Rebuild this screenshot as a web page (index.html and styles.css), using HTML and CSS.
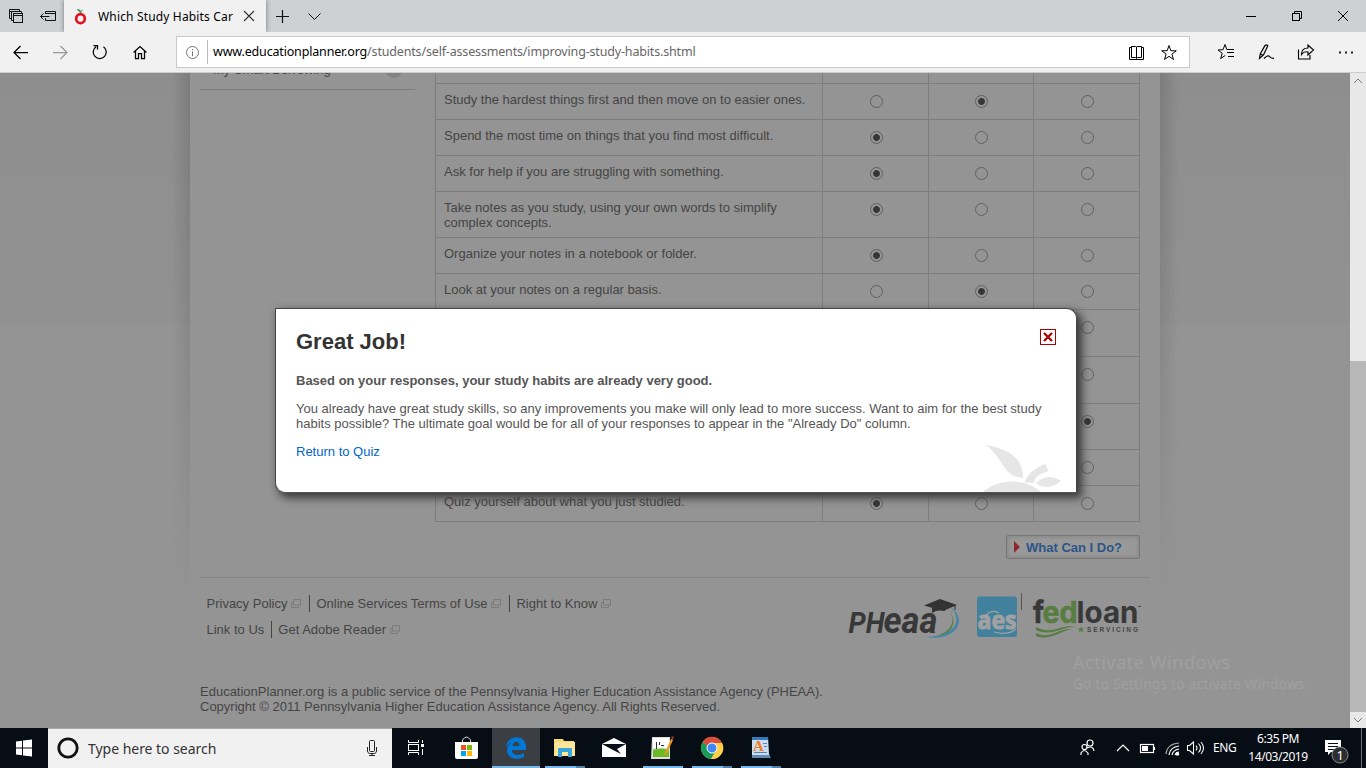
FILE: index.html
```html
<!DOCTYPE html>
<html lang="en">
<head>
<meta charset="utf-8">
<title>Which Study Habits Can You Improve?</title>
<link rel="stylesheet" href="styles.css">
</head>
<body>
<header class="tabbar">
  <svg class="tab-tools" width="64" height="32" fill="none" stroke="#111"><path d="M11.500 18.500h-2v-9h10v2M9.500 11.500h2M13.500 20.500h-2v-9h10v2"/><rect x="13.500" y="13.500" width="9" height="9" fill="#ced0d2"/><path d="M13.500 15.500h9M45.500 14v-2.500h10v9h-10v-2.500M45.500 13.500h10M40.500 16.500h9M43.500 13.500l-3 3 3 3"/></svg>
  <div class="tab">
    <svg width="14" height="20" viewBox="0 0 14 20"><ellipse cx="6.500" cy="12.700" rx="4.300" ry="4.500" fill="none" stroke="#e60f1e" stroke-width="2.700"/><path d="M6 7C5 5 3 4 3 3c3 0 3 1 4 2 1-2 2-1 3-1-2 0-2 1-3 3" fill="#3e9b60"/></svg>
    <span class="tab-title">Which Study Habits Car</span>
    <svg class="tab-x" width="12" height="12" stroke="#333" stroke-width="1.100"><path d="M1 1l10 10M11 1L1 11"/></svg>
  </div>
  <svg class="tab-new" width="64" height="32" fill="none" stroke="#111"><path d="M10 16.500h13M16.500 10v13" stroke-width="1.200"/><path d="M42.500 13.500l6 6 6-6"/></svg>
  <svg class="win-controls" width="138" height="32" fill="none" stroke="#000"><path d="M18 16.500h10"/><path d="M66.500 13v-1.500h7v7H72"/><rect x="64.500" y="13.500" width="7" height="7"/><path d="M110 11l10 10M120 11l-10 10"/></svg>
</header>
<nav class="toolbar">
  <svg class="nav-icons" width="176" height="40" fill="none" stroke="#000" stroke-width="1.250"><path d="M28 20.500H14M20.500 14L14 20.500l6.500 6.500"/><path d="M53 20.500h14M60.500 14l6.500 6.500-6.500 6.500" stroke="#999"/><path d="M96 14.800a6.500 6.500 0 1 0 7.500 0M93.500 13.500h4v4"/><path d="M133.500 20.500l6.500-6 6.500 6M135.500 19v7.500h3v-5h3v5h3V19"/></svg>
  <div class="address">
    <svg width="30" height="30" fill="none" stroke="#777"><circle cx="15.500" cy="15.500" r="6"/><path d="M15.500 14.500v4.500M15.500 12v1.200"/></svg>
    <p class="url"><b>www.educationplanner.org</b>/students/self-assessments/improving-study-habits.shtml</p>
    <svg width="66" height="30" fill="none" stroke="#000"><path d="M8.500 9.500h4q1 0 1 1 0-1 1-1h4v11h-4l-1 1-1-1h-4zM13.500 10v11M8.500 10.500h-2v12h14v-12h-2"/><path d="M46 8.500l1.800 5.200 5.500.1-4.400 3.300 1.600 5.400-4.500-3.200-4.500 3.200 1.600-5.400-4.400-3.300 5.500-.1z"/></svg>
  </div>
  <svg class="tool-icons" width="176" height="40" fill="none" stroke="#000"><path d="M39 17.500h-2.200L35 12.500 33 17.700l-5 .3 4.200 3.300-1.500 5.200 4.500-3M38 17.500h6M37 20.500h7M38 24.500h6"/><path d="M69.500 26.500l.8-4.500 4.700-8.500q2-1.500 2.800.3l-4.300 9.200zM70.500 22l2.800 1.500M74 26.500q4-4 5.500-2t4.500 1.800" stroke-width="1.200"/><path d="M108.500 17.500v9.500h11.500v-4M111.500 22.500q0-6.500 6.500-6.500v-3l5.500 5-5.500 5v-3q-4-1-6.500 2.500z" stroke-width="1.150"/><g fill="#222" stroke="none"><path d="M149 19.500h2v2h-2zM155 19.500h2v2h-2zM161 19.500h2v2h-2z"/></g></svg>
</nav>
<main class="viewport">
  <div class="page">
    <div class="gutter gutter-left"></div>
    <div class="sheet">
      <div class="columns">
        <aside class="sidebar"><span>My Smart Borrowing</span><i></i></aside>
        <div class="quiz">
          <div class="row stub"><p></p><span></span><span></span><span></span></div>
          <div class="row"><p>Study the hardest things first and then move on to easier ones.</p><span><i></i></span><span><i class="on"></i></span><span><i></i></span></div>
          <div class="row"><p>Spend the most time on things that you find most difficult.</p><span><i class="on"></i></span><span><i></i></span><span><i></i></span></div>
          <div class="row"><p>Ask for help if you are struggling with something.</p><span><i class="on"></i></span><span><i></i></span><span><i></i></span></div>
          <div class="row tall"><p>Take notes as you study, using your own words to simplify<br>complex concepts.</p><span><i class="on"></i></span><span><i></i></span><span><i></i></span></div>
          <div class="row"><p>Organize your notes in a notebook or folder.</p><span><i class="on"></i></span><span><i></i></span><span><i></i></span></div>
          <div class="row"><p>Look at your notes on a regular basis.</p><span><i></i></span><span><i class="on"></i></span><span><i></i></span></div>
          <div class="row taller"><p></p><span></span><span></span><span><i></i></span></div>
          <div class="row taller"><p></p><span></span><span></span><span><i></i></span></div>
          <div class="row tall"><p></p><span></span><span></span><span><i class="on"></i></span></div>
          <div class="row"><p></p><span></span><span></span><span><i></i></span></div>
          <div class="row"><p>Quiz yourself about what you just studied.</p><span><i class="on"></i></span><span><i></i></span><span><i></i></span></div>
          <a class="button">What Can I Do?</a>
        </div>
      </div>
      <footer class="footer">
        <div class="links">
          <div class="link-row"><a>Privacy Policy<svg width="10" height="9"><use href="#ext"/></svg></a><a>Online Services Terms of Use<svg width="10" height="9"><use href="#ext"/></svg></a><a>Right to Know<svg width="10" height="9"><use href="#ext"/></svg></a></div>
          <div class="link-row"><a>Link to Us</a><a>Get Adobe Reader<svg width="10" height="9"><use href="#ext"/></svg></a></div>
        </div>
        <svg class="logos" width="296" height="50" viewBox="846 592 296 50">
          <defs><g id="ext" fill="none" stroke="#7b7b7b"><path d="M2 3.500H.5v5h7V7"/><rect x="2.500" y=".5" width="7" height="5.500"/></g></defs>
          <g font-family="Roboto, sans-serif" font-weight="700" font-style="italic" fill="#383838">
            <text x="848.500" y="632.500" font-size="29" textLength="36" lengthAdjust="spacingAndGlyphs">PH</text>
            <text x="883.500" y="632.500" font-size="36" textLength="54" lengthAdjust="spacingAndGlyphs">eaa</text>
          </g>
          <path d="M924 605.500l16-6.500 17 6-14 6z" fill="#333"/><path d="M932 608v5q6-4 13-2v-3z" fill="#333"/><path d="M951 605l4 1v4" stroke="#333" fill="none"/>
          <path d="M947 609c11 10 5 24-14 28 19 0 27-17 14-28" fill="#587d41"/><path d="M950 607c15 14 3 30-24 30 30 5 43-18 24-30" fill="#4087a5"/>
          <rect x="977" y="596.500" width="40" height="40.500" rx="3" fill="#42819e"/>
          <text x="977.500" y="629" font-family="Open Sans, sans-serif" font-weight="700" font-size="25" fill="#a1a1a1" stroke="#a1a1a1" textLength="39" lengthAdjust="spacingAndGlyphs">aes</text>
          <path d="M986 615q6-6 13-2M994 632q13 4 22-3" fill="none" stroke="#a1a1a1" stroke-width="1.300"/>
          <path d="M1021.500 593v17" stroke="#555"/>
          <g font-family="Inter, sans-serif" font-weight="700" font-size="30"><text x="1033" y="623" textLength="11" lengthAdjust="spacingAndGlyphs" fill="#383838" stroke="#383838" stroke-width=".6">f</text><text x="1042.500" y="623" textLength="35" lengthAdjust="spacingAndGlyphs" fill="#587d41" stroke="#587d41" stroke-width=".6">ed</text><text x="1076.500" y="623" textLength="62" lengthAdjust="spacingAndGlyphs" fill="#383838">loan</text></g>
          <path d="M1036 627c17 9 25-4 39 0-14 0-24 10-39 3zM1036 633c15 7 21-5 36-4-14 3-22 12-36 7z" fill="#587d41"/>
          <path d="M1081 626.500l1 2h2.500l-2 1.600.8 2.400-2.300-1.400-2.300 1.400.8-2.400-2-1.600h2.500z" fill="#587d41"/>
          <text x="1087" y="632" font-family="Liberation Sans, sans-serif" font-weight="700" font-size="6.500" fill="#444" textLength="51">SERVICING</text>
          <path d="M1138 606.500h3" stroke="#444"/>
        </svg>
      </footer>
      <p class="legal">EducationPlanner.org is a public service of the Pennsylvania Higher Education Assistance Agency (PHEAA).<br>Copyright © 2011 Pennsylvania Higher Education Assistance Agency. All Rights Reserved.</p>
    </div>
    <div class="gutter gutter-right"></div>
    <section class="dialog">
      <h1>Great Job!</h1>
      <svg class="close" width="16" height="16"><rect x=".5" y=".5" width="15" height="15" fill="#fff" stroke="#a00"/><path d="M4 4l8 8M12 4l-8 8" stroke="#a00" stroke-width="2.300"/></svg>
      <h2>Based on your responses, your study habits are already very good.</h2>
      <p>You already have great study skills, so any improvements you make will only lead to more success. Want to aim for the best study<br>habits possible? The ultimate goal would be for all of your responses to appear in the "Already Do" column.</p>
      <a>Return to Quiz</a>
      <svg class="apple" width="78" height="48" fill="#e6e6e6"><path d="M3 1c24 4 37 14 37 33-20-1-18-18-37-33M0 48c15-14 43-14 58 0zM41.500 39q4-13 21-19l3 7q-14 4-15 12-5-1-9 0M53 39q12-11 25-2-14 11-25 2"/></svg>
    </section>
    <div class="watermark"><p>Activate Windows</p><small>Go to Settings to activate Windows.</small></div>
  </div>
  <div class="scrollbar"><svg width="16" height="16" fill="none" stroke="#777"><path d="M4 10l4-4 4 4"/></svg><div class="thumb"></div><svg width="16" height="16" fill="none" stroke="#777"><path d="M4 6l4 4 4-4"/></svg></div>
</main>
<footer class="taskbar">
  <svg class="start" width="48" height="40" fill="#fff"><path d="M16 13.500l6-.8v6.800h-6zM23 12.600l9-1.100v8h-9zM16 20.500h6v6.800l-6-.8zM23 20.500h9v8l-9-1.100z"/></svg>
  <div class="search"><svg width="40" height="39"><circle cx="20" cy="19" r="9.200" fill="none" stroke="#111" stroke-width="2.800"/></svg><span>Type here to search</span><svg width="43" height="39" fill="none" stroke="#222"><rect x="20.500" y="11.500" width="5" height="11" rx="1"/><path d="M18.500 18v4q0 2 2 2.500h5q2-.5 2-2.500v-4M23 24v3M20 26.500h6"/></svg></div>
  <div class="apps">
    <svg width="48" height="40" fill="none" stroke="#fff"><path d="M16.500 12v2.500h10V12M16.500 27v-2.500h10V27M30.500 12v3M30.500 21v6"/><rect x="16.500" y="16.500" width="10" height="6"/><path d="M29 16h3v3h-3z" fill="#fff" stroke="none"/></svg>
    <svg width="48" height="40"><path d="M13 14h23v15q0 2-2 2H15q-2 0-2-2z" fill="#fff"/><path d="M20.500 14v-2q4-6 8 0v2" fill="none" stroke="#ddd"/><path d="M19 17h5v5h-5z" fill="#f25022"/><path d="M25 17h5v5h-5z" fill="#7fba00"/><path d="M19 23h5v5h-5z" fill="#00a4ef"/><path d="M25 23h5v5h-5z" fill="#ffb900"/></svg>
    <svg class="active" width="48" height="40" viewBox="0 0 48 40"><path d="M14 19c1-13 20-13 20 0v3H20c0 6 8 6 12 3v4c-8 4-17 1-17-7 0-4 2-6 5-8-3 1-5 3-6 5m6.500-1h7c0-6-6.500-5-7 0" fill="#0078d7"/><path d="M0 38h48v2H0z" fill="#76b9ed"/></svg>
    <svg width="48" height="40"><path d="M13 11h9l1 2h10v15H13z" fill="#f8d775"/><path d="M14 14h20v14H14z" fill="#ffe69b"/><path d="M17 29v-8q0-1 1-1h12q1 0 1 1v8h-4v-5h-6v5z" fill="#37a8dc"/><path d="M4 38h31v2H4z" fill="#76b9ed"/><path d="M35 38h9v2h-9z" fill="#527fa5"/></svg>
    <svg width="48" height="40"><path d="M12 16l12-6 12 6v13H12z" fill="#fff"/><path d="M12 16h24l-9 5 4 5-8-4z" fill="#07101a"/></svg>
    <svg width="48" height="40"><path d="M13 9h18v22H12z" fill="#ddd"/><path d="M14 10h16v10H14z" fill="#fff"/><path d="M14 22q8-3 16 0v7H14z" fill="#69b922"/><path d="M17.500 14v7M20.500 14v3M22 17.500h3" stroke="#333"/><path d="M26 24l6-13 2 1-6 13-3 3z" fill="#e99b21"/><path d="M32 11l1-3 2 1-1 3z" fill="#8b392d"/><path d="M4 38h40v2H4z" fill="#76b9ed"/></svg>
    <svg width="48" height="40"><circle cx="24" cy="20" r="11" fill="#e8b52a"/><path d="M24 20L14.500 14.500A11 11 0 0 1 34 15z" fill="#dc4d3c"/><path d="M14.500 14.500A11 11 0 0 0 23 31l5-9-4-2z" fill="#169b5a"/><path d="M24 15h10a11 11 0 0 1-11 16l5.500-9z" fill="#ffcf47"/><circle cx="24" cy="20" r="5" fill="#4285f4" stroke="#fff"/><path d="M4 38h31v2H4z" fill="#76b9ed"/><path d="M35 38h9v2h-9z" fill="#527fa5"/></svg>
    <svg width="48" height="40"><path d="M15 9h16l1 17 1 3H15z" fill="#cbddee"/><path d="M15 9h16v3H15z" fill="#3579ba"/><path d="M26 15.500h4M27 18.500h3M17 24.500h13" stroke="#4e86bb"/><path d="M15 27h17l2 3H15z" fill="#618bb1"/><text x="16" y="23" class="pad-letter">A</text><path d="M4 38h31v2H4z" fill="#76b9ed"/><path d="M35 38h9v2h-9z" fill="#527fa5"/></svg>
  </div>
  <svg class="tray" width="136" height="40" fill="none" stroke="#fff" stroke-width="1.200"><circle cx="14" cy="15" r="3"/><circle cx="8.500" cy="19" r="2.500"/><path d="M5 27v-2q3-5 7 0v2M11 20q6-3 7 3"/><path d="M41 23l6-6 6 6"/><rect x="64.500" y="16.500" width="13" height="8"/><path d="M66 18h6v5h-6z" fill="#fff" stroke="none"/><path d="M78.500 19v3"/><path d="M90 26q1-10 13-11" stroke="#aaa"/><path d="M93 27q1-8 10-9M96 27q1-5 7-6M99 27q1-3 4-3"/><circle cx="101.500" cy="26" r="1.200" fill="#fff"/><path d="M111.500 17.500h2l4-3.500v12l-4-3.500h-2zM120 17.500q2 2.500 0 5M122.500 15.500q4 4.500 0 9M125 14q5 6 0 12" stroke-width="1.050"/></svg>
  <span class="lang">ENG</span>
  <div class="clock"><span>6:35 PM</span><span>14/03/2019</span></div>
  <svg class="notice" width="52" height="40"><path d="M11 12h16v12H17l-3 3v-3h-3z" fill="#fff"/><path d="M14 15.500h10M14 18.500h10M14 21.500h7" stroke="#07101a"/><circle cx="26" cy="27" r="8" fill="#2b2d2f" stroke="#888"/><text x="22.500" y="32">1</text><path d="M47.500 0v40" stroke="#687078"/></svg>
</footer>
</body>
</html>
```
FILE: styles.css
```css
* { box-sizing: border-box; }
body { margin: 0; width: 1366px; height: 768px; overflow: hidden; display: flex; flex-direction: column; font: 13px/15px "Liberation Sans", Arial, sans-serif; color: #444; }
svg { display: block; flex-shrink: 0; }
p, h1, h2 { margin: 0; }
.tabbar { display: flex; height: 32px; background: #ced0d2; font-family: "Noto Sans", sans-serif; }
.tab { display: flex; align-items: center; width: 202px; height: 32px; padding-left: 10px; background: #f1f1f1; color: #000; box-shadow: 0 0 5px #777; clip-path: inset(0 -5px 0 -5px); }
.tab-title { width: 136px; margin-left: 10px; font-size: 12px; white-space: nowrap; letter-spacing: .16px; }
.tab-x { margin-left: 9px; }
.win-controls { margin-left: auto; }
.toolbar { display: flex; height: 41px; background: #f1f1f1; border-bottom: 1px solid #ccc; align-items: flex-start; }
.address { display: flex; width: 1014px; height: 32px; margin-top: 4px; border: 1px solid #c9c9c9; background: #fff; }
.url { flex: 1; margin: 3px 0; padding-left: 5px; border-left: 1px solid #bbb; font: 12.500px/24px "Noto Sans", sans-serif; color: #666; letter-spacing: -.165px; white-space: nowrap; }
.url b { color: #000; font-weight: 400; }
.viewport { display: flex; height: 655px; }
.page { position: relative; display: flex; width: 1350px; height: 655px; background: #949494; overflow: hidden; }
.gutter { width: 190px; background: linear-gradient(#8e8e8e, #919191) 0 0 / 100% 251px no-repeat; }
.gutter::before { content: ""; display: block; height: 600px; background: linear-gradient(90deg, transparent 172px, #7c7c7c 190px); mask-image: linear-gradient(#000, transparent 90%); }
.gutter-right::before { background: linear-gradient(270deg, transparent 172px, #7c7c7c 190px); }
.sheet { width: 970px; background: #949494; }
.columns { display: flex; height: 504px; padding-left: 10px; gap: 20px; }
.sidebar { display: flex; width: 215px; height: 17px; padding-left: 13px; border-bottom: 1px solid #7d7d7d; }
.sidebar span { margin-top: -11px; flex: 1; white-space: nowrap; }
.sidebar i { width: 16px; height: 16px; margin: -11px 13px 0 0; border-radius: 50%; background: #838383; }
.quiz { display: flex; flex-direction: column; width: 705px; }
.row { display: grid; grid-template-columns: 387px 106px 105px 106px; height: 36px; flex-shrink: 0; border-bottom: 1px solid #7d7d7d; border-left: 1px solid #7d7d7d; }
.row.stub { height: 11px; }
.row.tall { height: 46px; }
.row.taller { height: 47px; }
.row > * { border-right: 1px solid #7d7d7d; }
.row > span { display: flex; justify-content: center; padding-top: 11px; padding-left: 2px; }
.row > span:nth-child(3) { padding-left: 0; }
.row p { padding: 8px; white-space: nowrap; }
.row i { width: 13px; height: 13px; border: 1px solid #606060; border-radius: 50%; }
.row i.on { background: radial-gradient(circle, #363636 3px, transparent 3.800px); }
.button { position: relative; align-self: flex-end; width: 134px; height: 24px; margin-top: 13px; padding-left: 19px; border: 1px solid #777; border-radius: 2px; background: #999; box-shadow: inset 0 0 4px #7d7d7d; color: #2c5588; font-weight: 700; line-height: 23px; }
.button::before { content: ""; position: absolute; left: 7px; top: 5px; border-left: 6px solid #8c2a2e; border-top: 6px solid transparent; border-bottom: 6px solid transparent; }
.footer { display: flex; justify-content: space-between; height: 107px; margin: 0 10px; padding: 14px 8px 0 0; border-top: 1px solid #858585; }
.links { padding-top: 3px; }
.link-row { display: flex; margin-bottom: 9px; }
.link-row a { display: flex; align-items: center; padding: 0 8px 0 6.500px; height: 17px; }
.link-row a + a { padding-left: 6px; border-left: 1px solid #444; }
.link-row:last-child a:first-child { padding-right: 7px; }
.link-row svg { margin-left: 4px; }
.legal { padding-left: 10px; white-space: nowrap; }
.dialog { position: absolute; left: 275px; top: 235px; width: 802px; height: 185px; padding: 20px; border: 1px solid #444; border-bottom-color: #555; border-radius: 0 10px; background: #fff; color: #555; box-shadow: 4px 4px 9px 1px #3a3a3a; }
.dialog h1 { color: #333; font-size: 22px; line-height: 25px; }
.dialog h2 { margin-top: 19px; font-size: 13px; line-height: 15px; }
.dialog p { margin: 13px 0; white-space: nowrap; }
.dialog a { color: #06c; }
.close { position: absolute; right: 20px; top: 20px; }
.apple { position: absolute; right: 15px; bottom: 0; }
.watermark { position: absolute; left: 1073px; top: 577px; color: #a0a0a0; font-family: "Noto Sans", sans-serif; white-space: nowrap; }
.watermark p { font-size: 18px; line-height: 24px; letter-spacing: .55px; }
.watermark small { display: block; font-size: 13.500px; line-height: 20px; letter-spacing: .35px; }
.scrollbar { display: flex; flex-direction: column; width: 16px; background: #e8e8e8; }
.thumb { height: 351px; margin-top: auto; background: #b8b8b8; }
.taskbar { display: flex; height: 40px; background: #070d15; color: #fff; font-family: "Noto Sans", sans-serif; }
.search { display: flex; width: 344px; height: 40px; background: #f1f1f1; border-top: 1px solid #aaa; align-items: center; color: #333; }
.search span { flex: 1; font-size: 14px; letter-spacing: -.03px; }
.apps { display: flex; gap: 1px; }
.apps svg:nth-child(2) { margin-left: 1px; }
.apps svg:nth-child(3) { margin-left: 1px; }
.active { background: #3b3e43; }
.pad-letter { font: bold 15px "Liberation Serif", serif; fill: #f17b22; }
.tray { margin-left: auto; }
.lang { width: 30px; padding-left: 1px; font-size: 12px; line-height: 39px; letter-spacing: -.4px; }
.clock { display: flex; flex-direction: column; align-items: center; width: 72px; padding-top: 2px; font-size: 12px; line-height: 18px; letter-spacing: -.45px; }
.notice text { fill: #fff; font: 13px "Noto Sans", sans-serif; }
```
